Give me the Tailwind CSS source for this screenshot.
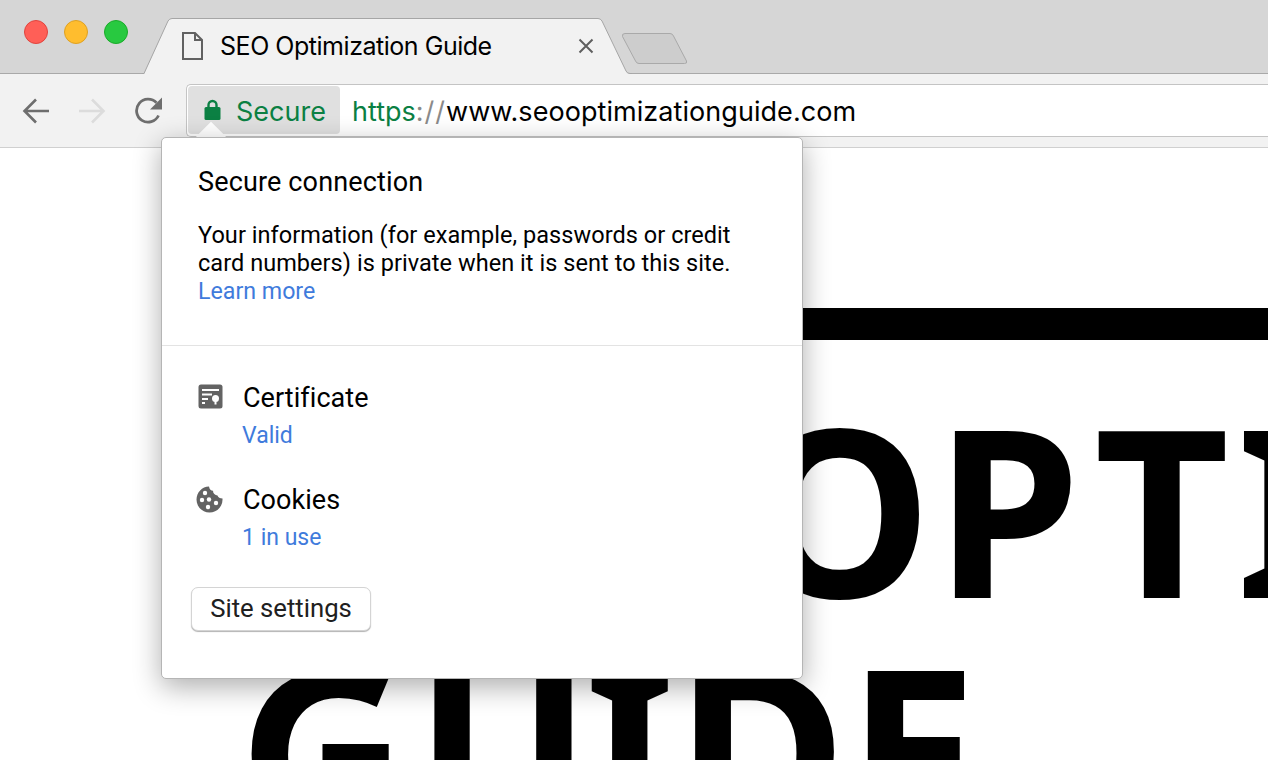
<!DOCTYPE html>
<html lang="en">
<head>
<meta charset="utf-8">
<title>SEO Optimization Guide</title>
<script src="https://cdn.jsdelivr.net/npm/@tailwindcss/browser@4"></script>
</head>
<body class="m-0 bg-white">
<div class="relative w-[1268px] h-[760px] overflow-hidden bg-white flex flex-col font-['Roboto',sans-serif] text-black">
  <!-- tab strip -->
  <header class="relative h-[74px] shrink-0 bg-[#d6d6d6] border-b border-[#a9a9a9] flex items-center">
    <div class="flex items-center gap-[16px] ml-[24px] mb-[9px]">
      <span class="w-[24px] h-[24px] rounded-full bg-[#ff5f57] border border-[#e0443e]"></span>
      <span class="w-[24px] h-[24px] rounded-full bg-[#ffbd2e] border border-[#dea123]"></span>
      <span class="w-[24px] h-[24px] rounded-full bg-[#28c940] border border-[#1aab29]"></span>
    </div>
    <svg class="absolute left-[142px] top-[17px]" width="490" height="58" viewBox="0 0 490 58" fill="none">
      <path d="M2 57 L26 4 Q27.500 1.500 30 1.500 L456 1.500 Q458.500 1.500 460 4 L485 56 L490 57 L490 58 L0 58 Z" fill="#f2f2f2"/>
      <path d="M0 56.500 L2 56.500 L26 4 Q27.500 1.500 30 1.500 L456 1.500 Q458.500 1.500 460 4 L484 54 Q485.200 56.500 488 56.500 L490 56.500" stroke="#a6a6a6" stroke-width="1"/>
    </svg>
    <div class="absolute left-[182px] top-[32px] flex items-center h-[28px]">
      <svg width="21" height="28" viewBox="0 0 21 28" fill="none" stroke="#616161" stroke-width="2">
        <path d="M1 27 V1 H13 L20 8 V27 Z"/><path d="M13 1 V8 H20"/>
      </svg>
      <span class="ml-[17px] text-[25px] leading-[28px] font-['Inter',sans-serif] tracking-[-0.47px] whitespace-nowrap">SEO Optimization Guide</span>
    </div>
    <svg class="absolute left-[578px] top-[38px]" width="16" height="16" viewBox="0 0 16 16" fill="none" stroke="#5f5f5f" stroke-width="2"><path d="M1.500 1.500 L14.500 14.500 M14.500 1.500 L1.500 14.500"/></svg>
    <svg class="absolute left-[621px] top-[32px]" width="68" height="33" viewBox="0 0 68 33" fill="#cdcdcd" stroke="#a9a9a9" stroke-width="1">
      <path d="M4 1.500 H49 Q51.500 1.500 52.500 4 L65.500 29 Q66.500 31.500 63.500 31.500 L18 31.500 Q15.500 31.500 14.500 29 L1.500 4.500 Q0.800 1.500 4 1.500 Z"/>
    </svg>
  </header>

  <!-- toolbar -->
  <nav class="relative h-[74px] shrink-0 bg-[#f2f2f2] border-b border-[#d0d0d0] flex items-center">
    <div class="flex items-center w-[186px] h-full">
      <svg class="ml-[22px]" width="28" height="26" viewBox="0 0 28 26" fill="none" stroke="#6e6e6e" stroke-width="2.600"><path d="M27 13 H3 M14 1.500 L2.500 13 L14 24.500"/></svg>
      <svg class="ml-[28px]" width="28" height="26" viewBox="0 0 28 26" fill="none" stroke="#dcdcdc" stroke-width="2.600"><path d="M1 13 H25 M14 1.500 L25.500 13 L14 24.500"/></svg>
      <svg class="ml-[29px]" width="28" height="28" viewBox="0 0 28 28" fill="none">
        <path d="M23.500 18.500 A11.500 11.500 0 1 1 21.500 5.800" stroke="#6e6e6e" stroke-width="2.800"/>
        <path d="M27 0.500 V12.500 H15 Z" fill="#6e6e6e"/>
      </svg>
    </div>
    <div class="flex-1 h-[53px] -mt-[1px] bg-white border border-r-0 border-[#c4c4c4] rounded-l-[5px] flex items-center pl-[1px]">
      <div class="w-[152px] h-[48px] bg-[#e0e0e0] rounded-[4px] flex items-center pl-[16px]">
        <svg width="17" height="22" viewBox="0 0 17 22" fill="none">
          <path d="M4.500 9 V6 A4 4 0 0 1 12.500 6 V9" stroke="#0b8043" stroke-width="2.400"/>
          <rect x="0.500" y="8" width="16" height="13" rx="1.500" fill="#0b8043"/>
        </svg>
        <span class="ml-[15px] pt-[3px] text-[27px] leading-[34px] font-['Inter',sans-serif] text-[#0b8043]">Secure</span>
      </div>
      <div class="ml-[12px] pt-[3px] text-[27px] leading-[34px] font-['Inter',sans-serif] tracking-[0.06px] whitespace-nowrap"><span class="text-[#0b8043] tracking-[0px]">https</span><span class="text-[#8a8a8a] tracking-[1px]">://</span><span>www.seooptimizationguide.com</span></div>
    </div>
  </nav>

  <!-- page -->
  <main class="flex-1 overflow-hidden bg-white">
    <div class="h-[32px] ml-[252px] mt-[160px] bg-black"></div>
    <h1 class="mt-[48px] text-[234px] leading-[240px] font-bold whitespace-nowrap font-['Noto_Sans',sans-serif]">
      <div class="ml-[241px]">SEO <span class="tracking-[3px]">O</span><span class="tracking-[14px]">P</span><span class="tracking-[7px]">T</span>IMIZATION</div>
      <div class="ml-[238px]"><span class="tracking-[7px]">G</span><span class="tracking-[-7px]">U</span>IDE</div>
    </h1>
  </main>

  <!-- popup -->
  <div class="absolute left-[211px] top-[126px] w-[21px] h-[21px] -translate-x-1/2 rotate-45 bg-white"></div>
  <section class="absolute left-[161px] top-[137px] w-[642px] h-[542px] bg-white rounded-[5px] border border-[#b5b5b5] shadow-[0_8px_28px_rgba(0,0,0,0.32)]">
    <div class="pt-[27px] pl-[36px] pr-[30px] pb-[40px] border-b border-[#e3e3e3]">
      <h2 class="text-[27px] tracking-[0.15px] leading-[34px] font-normal">Secure connection</h2>
      <p class="mt-[22px] text-[23.500px] tracking-[0.05px] leading-[28px]">Your information (for example, passwords or credit card numbers) is private when it is sent to this site. <a class="block text-[23.200px] tracking-normal text-[#3f7bdc]">Learn more</a></p>
    </div>
    <div class="pl-[29px] pt-[35px]">
      <div class="flex">
        <svg class="ml-[7px] mt-[3px] shrink-0" width="25" height="25" viewBox="0 0 25 25">
          <rect x="0.500" y="0.500" width="24" height="24" rx="2.500" fill="#636363"/>
          <path d="M4 5 H21 V7 H4 Z M4 9.500 H14 V11.500 H4 Z M4 14 H10 V16 H4 Z M4 18 H7 V20 H4 Z" fill="#fff"/>
          <circle cx="17.500" cy="14.500" r="3.500" fill="#fff"/><rect x="16.500" y="16" width="2" height="4.500" fill="#fff"/>
        </svg>
        <div class="ml-[20px]">
          <div class="text-[27px] tracking-[0.05px] leading-[34px]">Certificate</div>
          <div class="mt-[7px] -ml-[1px] text-[23px] leading-[28px] text-[#3f7bdc]">Valid</div>
        </div>
      </div>
      <div class="flex mt-[33px]">
        <svg class="ml-[5px] mt-[3px] shrink-0" width="27" height="27" viewBox="0 0 27 27">
          <path d="M13 0.500 C13.500 3.500 15 4.500 17 4.800 C17 7.500 19 9.500 21.500 9.500 C22 11.500 24 12.500 26.500 12.500 C27 20.500 21 26.500 13.500 26.500 C6 26.500 0.500 20.500 0.500 13.500 C0.500 6.500 6 0.500 13 0.500 Z" fill="#636363"/>
          <circle cx="9" cy="7" r="2.200" fill="#fff"/><circle cx="6" cy="14" r="2.200" fill="#fff"/><circle cx="13" cy="13.500" r="2.200" fill="#fff"/><circle cx="20" cy="17" r="2.200" fill="#fff"/><circle cx="12" cy="21" r="2.200" fill="#fff"/>
        </svg>
        <div class="ml-[20px]">
          <div class="text-[27px] tracking-[0.05px] leading-[34px]">Cookies</div>
          <div class="mt-[7px] -ml-[1px] text-[23px] leading-[28px] text-[#3f7bdc]">1 in use</div>
        </div>
      </div>
      <button class="mt-[35px] w-[180px] h-[44px] pb-[2px] bg-white border border-[#d4d4d4] rounded-[7px] shadow-[0_1px_1px_rgba(0,0,0,0.3)] text-[25.700px] text-[#202020] text-center">Site settings</button>
    </div>
  </section>
</div>
</body>
</html>
